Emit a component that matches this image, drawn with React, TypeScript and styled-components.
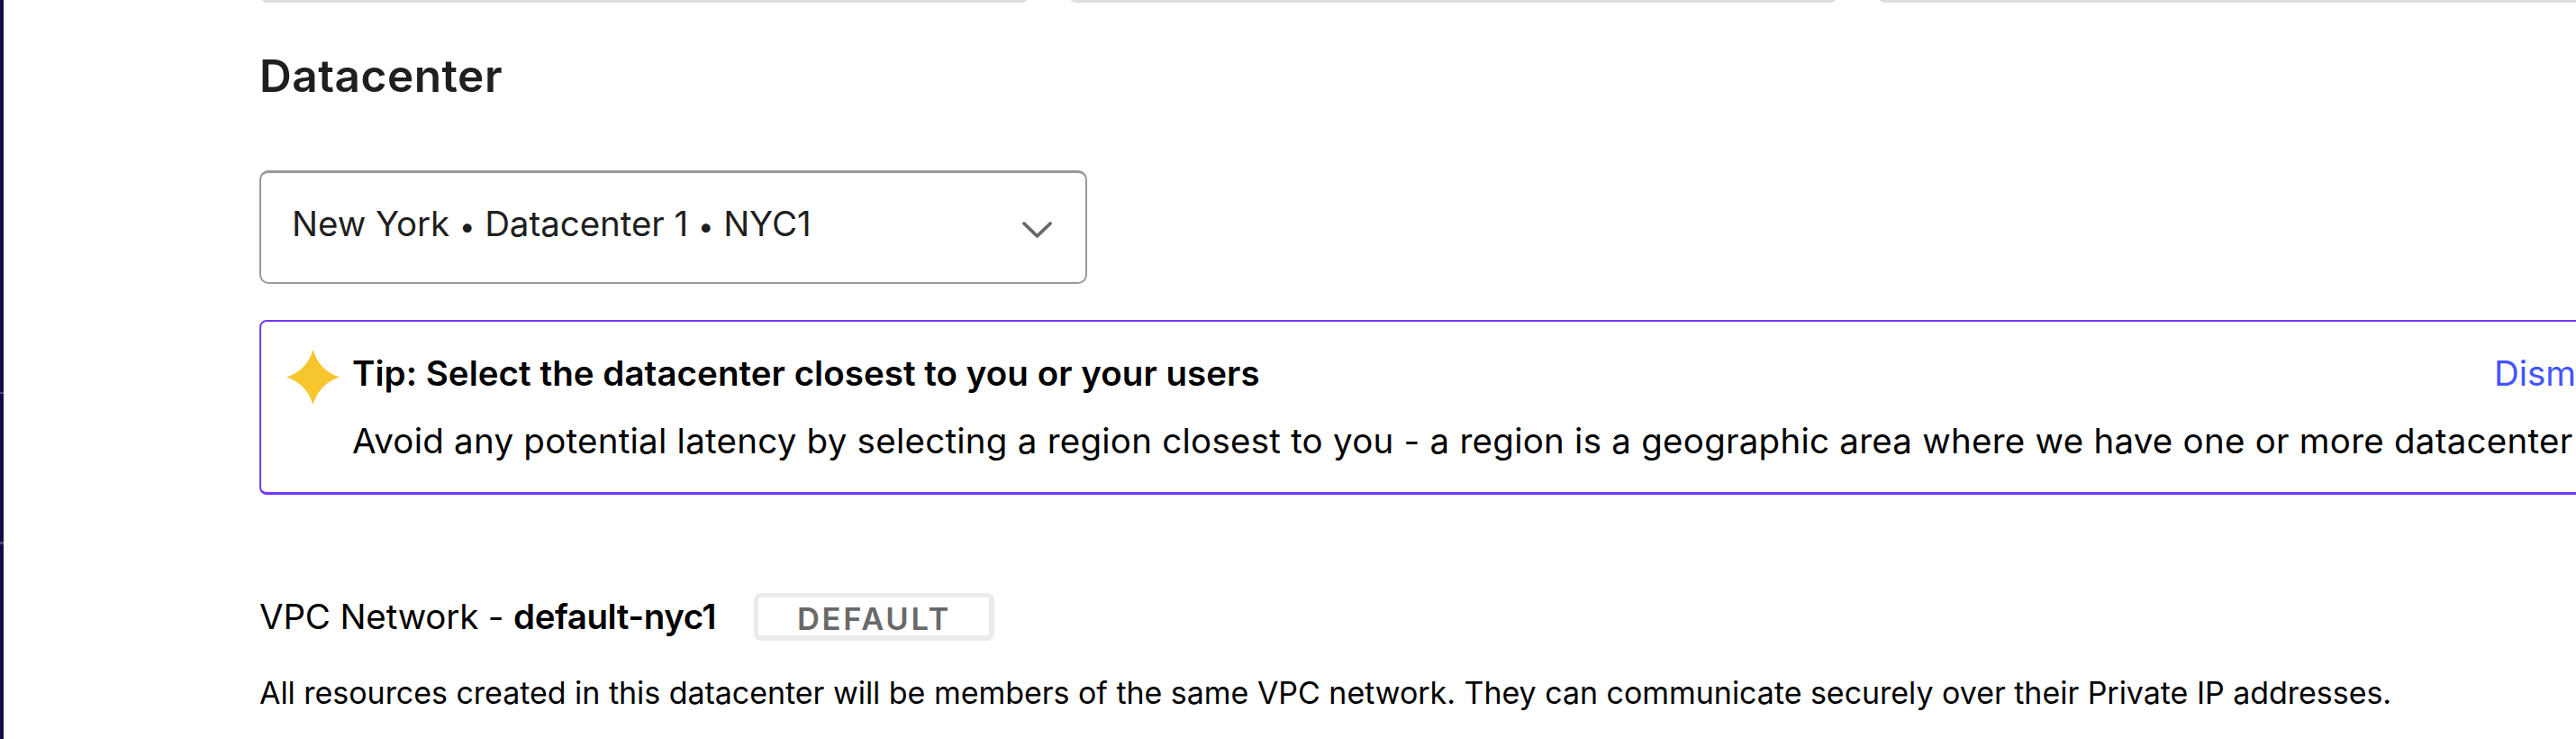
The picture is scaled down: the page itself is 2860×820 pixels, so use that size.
import React from "react";
import styled, { createGlobalStyle } from "styled-components";

const GlobalStyle = createGlobalStyle`
  *, *::before, *::after { box-sizing: border-box; }
  body {
    margin: 0;
    background: #ffffff;
    color: #000000;
    font-family: Inter, "Liberation Sans", sans-serif;
    overflow: hidden;
  }
`;

const Page = styled.div`
  display: flex;
  width: 100%;
  height: 820px;
  overflow: hidden;
`;

const Sidebar = styled.aside`
  display: flex;
  flex-direction: column;
  flex: none;
  width: 4px;
  background: #110e46;
`;

const SidebarGroup = styled.div<{ $height: number }>`
  height: ${(p) => p.$height}px;
`;

const SidebarDivider = styled.div<{ $height: number }>`
  height: ${(p) => p.$height}px;
  background: #4a4a71;
`;

const Content = styled.main`
  flex: 1;
  min-width: 0;
  padding-left: 284px;
  overflow: hidden;
`;

const CardStrip = styled.div`
  display: flex;
  align-items: flex-end;
  gap: 43px;
  height: 3px;
  overflow: hidden;
`;

const CardEdge = styled.div`
  flex: none;
  width: 855px;
  height: 24px;
  border: 3px solid #dedede;
  border-radius: 9px;
`;

const Heading = styled.h2`
  margin: 51px 0 0;
  font-size: 49.5px;
  font-weight: 600;
  line-height: 60px;
  letter-spacing: 0.55px;
  color: #1f1f1f;
`;

const Select = styled.button`
  display: flex;
  align-items: center;
  justify-content: space-between;
  width: 919px;
  height: 126px;
  margin-top: 75px;
  padding: 0 36px 9px 34px;
  border: 2px solid #999999;
  border-top-width: 3px;
  border-radius: 10px;
  background: #ffffff;
  font-family: inherit;
  color: #1f1f1f;
`;

const SelectValue = styled.span`
  font-size: 38.5px;
  letter-spacing: -0.05px;
  white-space: nowrap;
`;

const Bullet = styled.span`
  font-size: 31px;
`;

const Chevron = styled.svg`
  flex: none;
  margin-top: 13px;
`;

const Tip = styled.section`
  display: flex;
  width: 2652px;
  height: 194px;
  margin-top: 40px;
  padding: 27px 28px 0 28px;
  border: 2px solid #6e3aff;
  border-bottom-width: 3px;
  border-radius: 8px;
`;

const Star = styled.svg`
  flex: none;
  margin-top: 4px;
`;

const TipBody = styled.div`
  flex: 1;
  min-width: 0;
  margin-left: 14px;
`;

const TipHeader = styled.div`
  display: flex;
  justify-content: space-between;
  line-height: 60px;
`;

const TipTitle = styled.strong`
  font-size: 38.5px;
  font-weight: 600;
  letter-spacing: 0.05px;
`;

const Dismiss = styled.a`
  font-size: 38.5px;
  color: #4255ff;
`;

const TipText = styled.p`
  margin: 15px 0 0;
  font-size: 38.5px;
  line-height: 60px;
  letter-spacing: 0.245px;
  white-space: nowrap;
`;

const NetworkRow = styled.div`
  display: flex;
  align-items: center;
  height: 53px;
  margin-top: 109px;
`;

const NetworkName = styled.div`
  width: 507px;
  font-size: 38.5px;
  line-height: 53px;
  letter-spacing: -0.15px;
  white-space: nowrap;
`;

const NetworkId = styled.strong`
  font-weight: 600;
  letter-spacing: -0.45px;
`;

const Badge = styled.span`
  display: flex;
  align-items: center;
  justify-content: center;
  width: 267px;
  height: 53px;
  margin-left: 42px;
  padding: 5px 0 0 1px;
  border: 5px solid #ebebeb;
  border-right-width: 6px;
  border-bottom-width: 6px;
  border-radius: 8px;
  font-size: 34.5px;
  font-weight: 600;
  line-height: 37px;
  letter-spacing: 2.75px;
  color: #696969;
`;

const Note = styled.p`
  margin: 38px 0 0;
  font-size: 34px;
  line-height: 40px;
  letter-spacing: -0.035px;
  white-space: nowrap;
`;

export default function App() {
  return (
    <>
      <GlobalStyle />
      <Page>
        <Sidebar>
          <SidebarGroup $height={435} />
          <SidebarDivider $height={2} />
          <SidebarGroup $height={164} />
          <SidebarDivider $height={3} />
        </Sidebar>
        <Content>
          <CardStrip>
            <CardEdge />
            <CardEdge />
            <CardEdge />
          </CardStrip>
          <Heading>Datacenter</Heading>
          <Select type="button">
            <SelectValue>
              New York <Bullet>•</Bullet> Datacenter 1 <Bullet>•</Bullet> NYC1
            </SelectValue>
            <Chevron width="36" height="22" viewBox="0 0 36 22" fill="none">
              <path d="M4 4 18.5 18 33 4" stroke="#696969" strokeWidth="3.8" strokeLinecap="round" strokeLinejoin="round" />
            </Chevron>
          </Select>
          <Tip>
            <Star width="59" height="61" viewBox="0 0 59 61">
              <path
                d="M29.5 0C34 15.5 44.5 26 59 30.5C44.5 35 34 45.5 29.5 61C25 45.5 14.5 35 0 30.5C14.5 26 25 15.5 29.5 0Z"
                fill="#f7c52d"
              />
            </Star>
            <TipBody>
              <TipHeader>
                <TipTitle>Tip: Select the datacenter closest to you or your users</TipTitle>
                <Dismiss>Dismiss</Dismiss>
              </TipHeader>
              <TipText>
                Avoid any potential latency by selecting a region closest to you - a region is a geographic area where we have one or more datacenter
              </TipText>
            </TipBody>
          </Tip>
          <NetworkRow>
            <NetworkName>
              VPC Network - <NetworkId>default-nyc1</NetworkId>
            </NetworkName>
            <Badge>DEFAULT</Badge>
          </NetworkRow>
          <Note>
            All resources created in this datacenter will be members of the same VPC network. They can communicate securely over their Private IP addresses.
          </Note>
        </Content>
      </Page>
    </>
  );
}
